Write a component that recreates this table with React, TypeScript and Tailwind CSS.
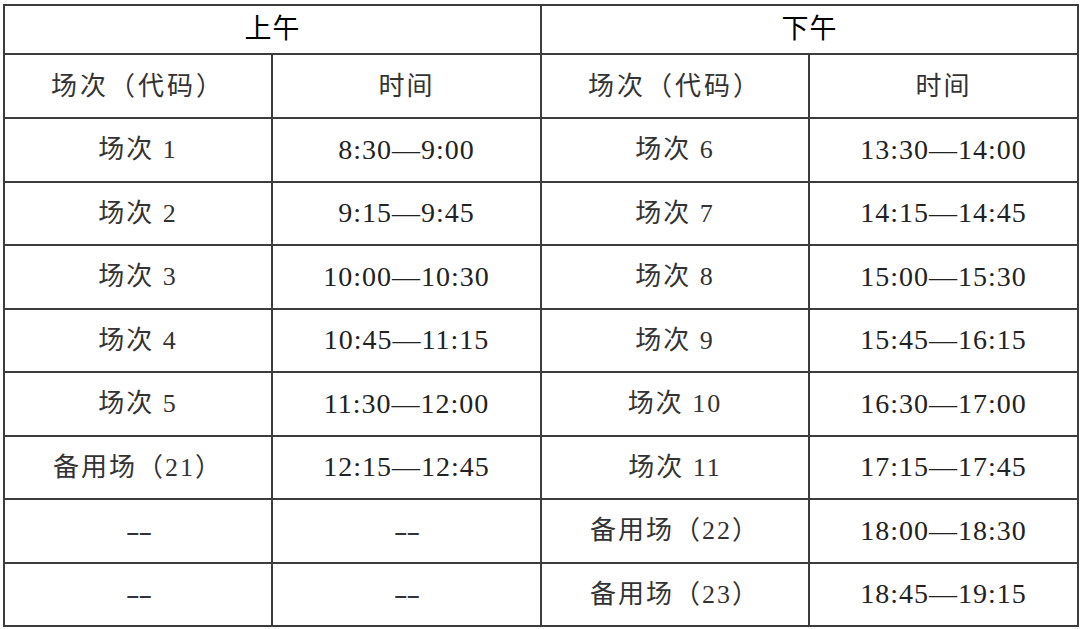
import React from "react";

const rows: [string, string, string, string][] = [
  ["场次 1", "8:30—9:00", "场次 6", "13:30—14:00"],
  ["场次 2", "9:15—9:45", "场次 7", "14:15—14:45"],
  ["场次 3", "10:00—10:30", "场次 8", "15:00—15:30"],
  ["场次 4", "10:45—11:15", "场次 9", "15:45—16:15"],
  ["场次 5", "11:30—12:00", "场次 10", "16:30—17:00"],
  ["备用场（21）", "12:15—12:45", "场次 11", "17:15—17:45"],
  ["--", "--", "备用场（22）", "18:00—18:30"],
  ["--", "--", "备用场（23）", "18:45—19:15"],
];

const font = "[font-family:'Liberation_Serif','Noto_Sans_CJK_SC',serif]";

function NameCell({ text, wide }: { text: string; wide?: boolean }) {
  if (text === "--") return <DashCell />;
  return (
    <td
      className={`border-2 border-[#3c3c3c] text-center align-middle text-[26px] text-[#333] ${
        wide ? "tracking-[3px]" : "tracking-[2px]"
      }`}
    >
      {text}
    </td>
  );
}

function DashCell() {
  return (
    <td className="border-2 border-[#3c3c3c] text-center align-middle text-[28px] text-[#333]">
      <span className="inline-block scale-x-[1.5] tracking-[-1px]">--</span>
    </td>
  );
}

function TimeCell({ text }: { text: string }) {
  if (text === "--") return <DashCell />;
  return (
    <td className="border-2 border-[#3c3c3c] text-center align-middle text-[28px] tracking-[1px] text-[#222]">
      {text}
    </td>
  );
}

export default function App() {
  return (
    <div className={`w-[1080px] h-[629px] bg-white pt-[4px] pl-[3px] ${font}`}>
      <table className="w-[1074px] table-fixed border-collapse">
        <colgroup>
          <col className="w-[268px]" />
          <col className="w-[269px]" />
          <col className="w-[268px]" />
          <col className="w-[269px]" />
        </colgroup>
        <tbody>
          <tr className="h-[49px]">
            <td colSpan={2} className="border-2 border-[#3c3c3c] text-center align-middle text-[27px] font-normal tracking-[1px] text-black">
              上午
            </td>
            <td colSpan={2} className="border-2 border-[#3c3c3c] text-center align-middle text-[27px] font-normal tracking-[1px] text-black">
              下午
            </td>
          </tr>
          <tr className="h-[64px]">
            <NameCell text="场次（代码）" wide />
            <NameCell text="时间" />
            <NameCell text="场次（代码）" wide />
            <NameCell text="时间" />
          </tr>
          {rows.map((r, i) => (
            <tr key={i} className="h-[63.5px]">
              <NameCell text={r[0]} />
              <TimeCell text={r[1]} />
              <NameCell text={r[2]} />
              <TimeCell text={r[3]} />
            </tr>
          ))}
        </tbody>
      </table>
    </div>
  );
}
